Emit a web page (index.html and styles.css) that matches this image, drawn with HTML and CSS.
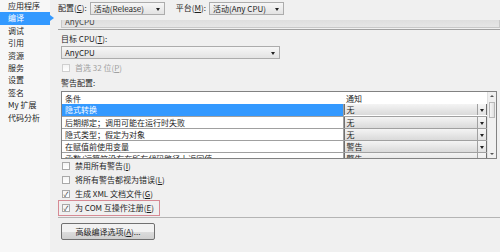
FILE: index.html
```html
<!DOCTYPE html>
<html lang="zh-CN">
<head>
  <meta charset="UTF-8" />
  <title>编译</title>
  <link rel="stylesheet" href="styles.css">
</head>
<body>
  <div class="sidebar">
    <div class="tab">应用程序</div>
    <div class="tab active">编译</div>
    <div class="tab">调试</div>
    <div class="tab">引用</div>
    <div class="tab">资源</div>
    <div class="tab">服务</div>
    <div class="tab">设置</div>
    <div class="tab">签名</div>
    <div class="tab">My 扩展</div>
    <div class="tab">代码分析</div>
  </div>

  <div class="main">
    <div class="topbar">
      <span class="label">配置(<u>C</u>):</span>
      <div class="combo combo-small">活动(Release)</div>
      <span class="label label-platform">平台(<u>M</u>):</span>
      <div class="combo combo-small">活动(Any CPU)</div>
    </div>

    <div class="cut-band"><span>AnyCPU</span></div>
    <div class="rule"></div>

    <div class="content">
      <div class="label">目标 CPU(<u>T</u>):</div>
      <div class="combo combo-wide">AnyCPU</div>

      <div class="check disabled"><span class="box"></span>首选 32 位(<u>P</u>)</div>

      <div class="label label-section">警告配置:</div>

      <div class="grid-wrap">
        <table class="grid">
          <thead>
            <tr><th class="col-cond">条件</th><th>通知</th></tr>
          </thead>
          <tbody>
            <tr class="selected"><td>隐式转换</td><td><div class="cell-combo">无</div></td></tr>
            <tr><td>后期绑定；调用可能在运行时失败</td><td><div class="cell-combo">无</div></td></tr>
            <tr><td>隐式类型；假定为对象</td><td><div class="cell-combo">无</div></td></tr>
            <tr><td>在赋值前使用变量</td><td><div class="cell-combo">警告</div></td></tr>
            <tr><td>函数/运算符没有在所有代码路径上返回值</td><td><div class="cell-combo">警告</div></td></tr>
          </tbody>
        </table>
        <div class="scrollbar">
          <span class="arrow-up"></span>
          <span class="thumb"></span>
          <span class="arrow-down"></span>
        </div>
      </div>

      <div class="check check-first"><span class="box"></span>禁用所有警告(<u>I</u>)</div>
      <div class="check"><span class="box"></span>将所有警告都视为错误(<u>L</u>)</div>
      <div class="check"><span class="box checked">✓</span>生成 XML 文档文件(<u>G</u>)</div>
      <div class="check check-marked"><span class="box checked">✓</span>为 COM 互操作注册(<u>E</u>)</div>
    </div>

    <div class="rule rule-bottom"></div>

    <div class="content">
      <button class="btn" type="button">高级编译选项(<u>A</u>)...</button>
    </div>
  </div>
</body>
</html>
```

FILE: styles.css
```css
html, body {
  height: 100%;
  margin: 0;
  padding: 0;
}

body {
  display: flex;
  font-family: "Noto Sans CJK SC", "Noto Sans", sans-serif;
  font-size: 8px;
  line-height: 10px;
  color: #1e1e1e;
  background-color: #f0f0f0;
  overflow: hidden;
}

u {
  text-decoration: underline;
}

.sidebar {
  width: 50px;
  background-color: #f7f7f7;
  flex-shrink: 0;
}

.tab {
  height: 12.4px;
  line-height: 12px;
  padding-left: 8px;
  position: relative;
  white-space: nowrap;
}

.tab.active {
  background-color: #3399ff;
  color: white;
}

.tab.active::after {
  content: "";
  position: absolute;
  right: -4px;
  top: 3px;
  border-left: 4px solid #3399ff;
  border-top: 3px solid transparent;
  border-bottom: 3px solid transparent;
}

.main {
  flex: 1;
  padding-left: 8px;
  display: flex;
  flex-direction: column;
}

.topbar {
  display: flex;
  align-items: center;
  height: 16px;
  flex-shrink: 0;
}

.label {
  white-space: nowrap;
  height: 10px;
  line-height: 10px;
}

.topbar .label {
  margin-right: 3px;
}

.label-platform {
  margin-left: 11px;
}

.combo {
  position: relative;
  height: 11px;
  line-height: 11px;
  border: 1px solid #acacac;
  background: linear-gradient(#f6f6f6, #e3e3e3);
  padding-left: 3px;
  white-space: nowrap;
  flex-shrink: 0;
}

.combo::after {
  content: "";
  position: absolute;
  right: 4px;
  top: 5px;
  border-top: 3px solid #222;
  border-left: 2px solid transparent;
  border-right: 2px solid transparent;
}

.combo-small {
  width: 70px;
}

.cut-band {
  margin: 4px 0 0 3px;
  height: 7px;
  flex-shrink: 0;
  border: 1px solid #c8c8c8;
  border-top: none;
  background: linear-gradient(#dedede, #e6e6e6);
  overflow: hidden;
  position: relative;
}

.cut-band span {
  position: absolute;
  left: 3px;
  bottom: 0;
  line-height: 10px;
  color: #444;
}

.rule {
  height: 1px;
  flex-shrink: 0;
  background-color: #a0a0a0;
  margin-top: 1px;
}

.rule-bottom {
  margin-top: 4px;
  background-color: #b4b4b4;
}

.content {
  padding-left: 3px;
  display: flex;
  flex-direction: column;
  align-items: flex-start;
  flex-shrink: 0;
}

.content > .label:first-child {
  margin-top: 4px;
}

.combo-wide {
  margin-top: 2px;
  width: 214px;
}

.check {
  display: flex;
  align-items: center;
  height: 10px;
  line-height: 10px;
  margin-top: 4px;
  white-space: nowrap;
  padding-left: 1px;
  flex-shrink: 0;
}

.check-first {
  margin-top: 2px;
}

.check.disabled {
  color: #a0a0a0;
}

.box {
  width: 6px;
  height: 6px;
  border: 1px solid #a8a8a8;
  background: linear-gradient(#f4f4f4, #ffffff);
  margin-right: 5px;
  font-size: 7px;
  line-height: 6px;
  text-align: center;
  color: #333;
  overflow: hidden;
}

.check.disabled .box {
  border-color: #cfcfcf;
}

.check-marked {
  outline: 1px solid #d68a94;
  outline-offset: 2px;
  padding-right: 3px;
}

.label-section {
  margin-top: 5px;
}

.grid-wrap {
  margin-top: 3px;
  display: flex;
  width: 434px;
  height: 66px;
  flex-shrink: 0;
  border: 1px solid #828282;
  background-color: white;
  overflow: hidden;
}

.grid {
  border-collapse: collapse;
  table-layout: fixed;
  width: 425px;
  align-self: flex-start;
}

.grid tr {
  height: 12px;
}

.grid th,
.grid td {
  height: 12px;
  padding: 0 0 0 3px;
  font-weight: normal;
  text-align: left;
  line-height: 11px;
  white-space: nowrap;
  overflow: hidden;
  border-bottom: 1px solid #a0a0a0;
  box-sizing: border-box;
}

.grid th {
  border-bottom: none;
}

.grid .col-cond {
  width: 281px;
}

.grid td:first-child {
  border-right: 1px solid #a0a0a0;
}

.grid tr.selected td:first-child {
  background-color: #3399ff;
  color: white;
}

.grid td:last-child {
  padding: 0;
}

.cell-combo {
  position: relative;
  height: 11px;
  line-height: 11px;
  padding-left: 2px;
  border: 1px solid #707070;
  border-top: none;
  border-bottom: none;
  background: linear-gradient(#f4f4f4, #dadada);
}

.cell-combo::after {
  content: "";
  position: absolute;
  right: 0;
  top: 0;
  width: 8px;
  height: 11px;
  border-left: 1px solid #a0a0a0;
  background: linear-gradient(#f6f6f6, #e2e2e2);
}

.cell-combo::before {
  content: "";
  position: absolute;
  right: 2px;
  top: 5px;
  z-index: 1;
  border-top: 3px solid #222;
  border-left: 2px solid transparent;
  border-right: 2px solid transparent;
}

.scrollbar {
  flex: 1;
  position: relative;
  background-color: #f0f0f0;
  border-left: 1px solid #e0e0e0;
}

.arrow-up,
.arrow-down {
  position: absolute;
  left: 2px;
  border-left: 2px solid transparent;
  border-right: 2px solid transparent;
}

.arrow-up {
  top: 3px;
  border-bottom: 2px solid #555;
}

.arrow-down {
  bottom: 3px;
  border-top: 2px solid #555;
}

.thumb {
  position: absolute;
  left: 1px;
  right: 1px;
  top: 10px;
  height: 14px;
  border: 1px solid #b8b8b8;
  background: linear-gradient(90deg, #f6f6f6, #e0e0e0);
}

.btn {
  margin-top: 5px;
  width: 94px;
  height: 17px;
  padding: 0;
  font-family: inherit;
  font-size: 8px;
  color: #1e1e1e;
  border: 1px solid #707070;
  border-radius: 2px;
  background: linear-gradient(#f2f2f2 50%, #dddddd 50%, #cfcfcf);
}
```
